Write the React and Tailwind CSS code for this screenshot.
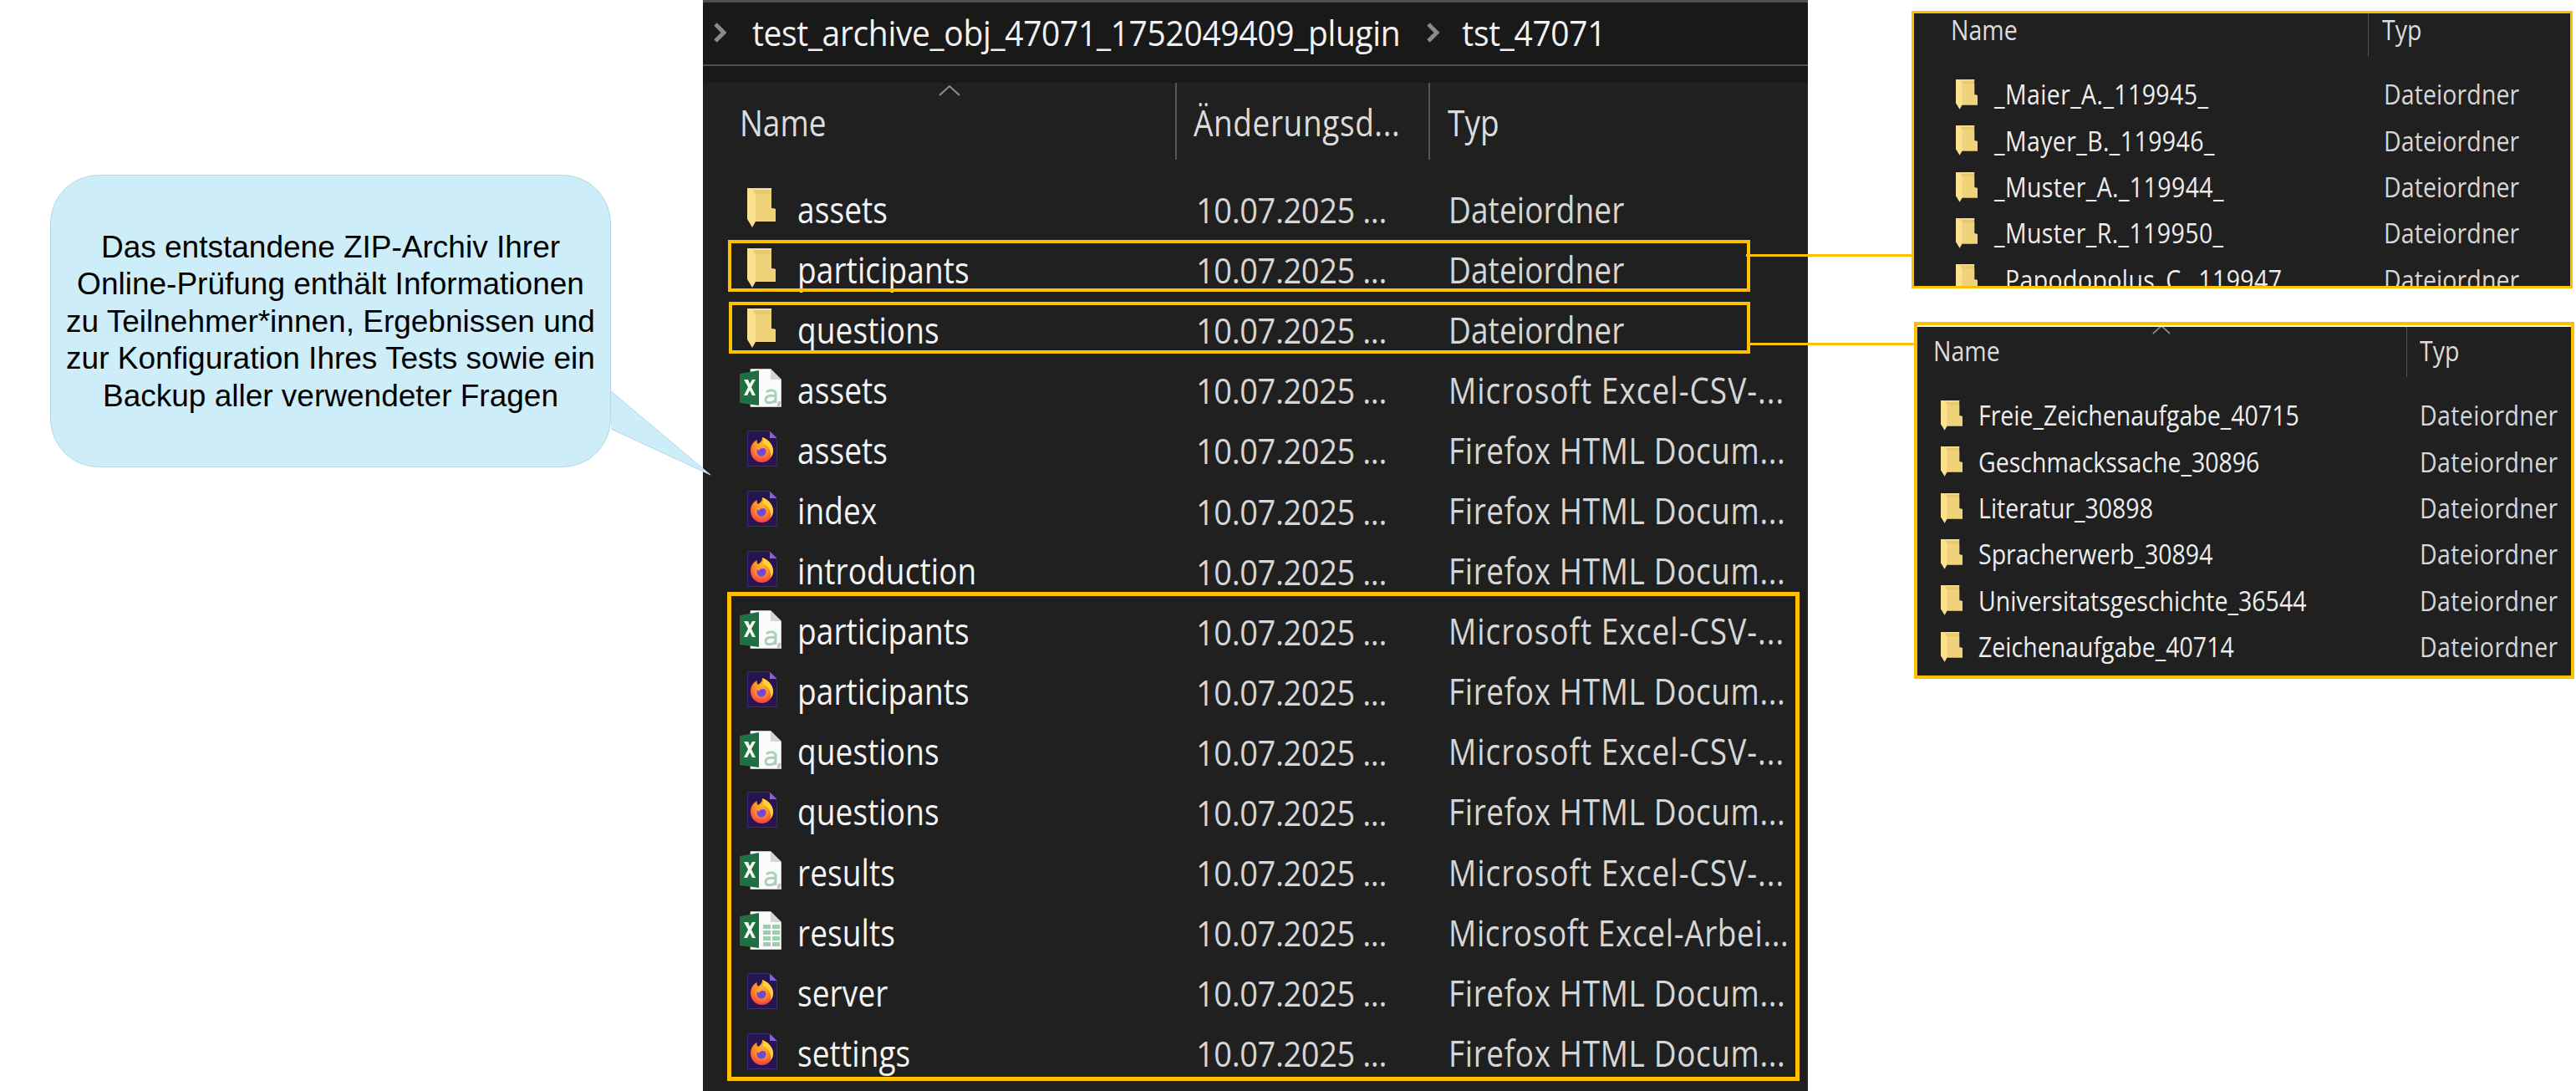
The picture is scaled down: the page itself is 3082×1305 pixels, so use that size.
const UI = "font-['Open_Sans',sans-serif]";

function FolderIcon({ className }) {
  return (
    <svg viewBox="0 0 34 48" className={className}>
      <path d="M6 1H29V25L34 26V41H10L6 40Z" fill="#e9c96c" />
      <path d="M10 8H29V25L34 26V41H10Z" fill="#f0d27a" />
      <path d="M0 1H6L10 8V41L6 48L0 38Z" fill="#fae08f" />
      <path d="M6 1H29V3H8Z" fill="#f8e2a0" />
    </svg>
  );
}

function ExcelIcon({ sheet }) {
  return (
    <svg viewBox="0 0 50 46" className="w-[50px] h-[46px]">
      <path d="M13 0.5H37L49.5 13V45.5H13Z" fill="#fbfbfb" stroke="#c8c8c8" />
      <path d="M37 0.5L49.5 13H37Z" fill="#d4d4d4" />
      {sheet ? (
        <g fill="#9fcdb0">
          <rect x="28" y="16" width="9" height="5" />
          <rect x="39" y="16" width="9" height="5" />
          <rect x="28" y="23" width="9" height="5" />
          <rect x="39" y="23" width="9" height="5" />
          <rect x="28" y="30" width="9" height="5" />
          <rect x="39" y="30" width="9" height="5" />
          <rect x="28" y="37" width="9" height="5" />
          <rect x="39" y="37" width="9" height="5" />
        </g>
      ) : (
        <g fill="none" stroke="#a5d3b5" strokeWidth="3">
          <path d="M32 28C35 25 42 25 43 29V41M43 33C36 31 31 33 31 37C31 42 39 42 43 37" />
          <path d="M48 39L46 45" stroke="#bcbcbc" />
        </g>
      )}
      <path d="M0 6L23 2V44L0 41Z" fill="#1f6f43" />
      <path d="M5 13H10L12 18L15 13H19L14 22L19 32H15L12 26L9 32H5L10 22Z" fill="#f2f7f3" />
    </svg>
  );
}

function FirefoxIcon() {
  return (
    <svg viewBox="0 0 36 43" className="w-[36px] h-[43px]">
      <defs>
        <radialGradient id="ffRing" cx="50%" cy="35%" r="70%">
          <stop offset="0%" stopColor="#ffb52e" />
          <stop offset="50%" stopColor="#ff8a1f" />
          <stop offset="100%" stopColor="#ef2f5a" />
        </radialGradient>
      </defs>
      <path d="M0.5 0.5H26L35.5 9V42.5H0.5Z" fill="#26154f" stroke="#3b2a78" />
      <path d="M27 0.5L35.5 9H27Z" fill="#8660e0" />
      <path d="M4 24C4 18 7 13 12 11C11 13 12 15 13 16C16 14 18 12 18 8C24 10 31 16 31 24C31 32 25 38 17.5 38C10 38 4 32 4 24Z" fill="url(#ffRing)" />
      <path d="M18 8C24 10 31 16 31 24C31 27 30 30 28 32C29 25 26 18 18 15C20 13 19 10 18 8Z" fill="#ffd23e" />
      <circle cx="17" cy="25" r="5.5" fill="#7048d8" />
      <path d="M11 21C14 18 20 17 23 22C19 20 15 21 14 24Z" fill="#ffa12b" />
    </svg>
  );
}

function Chevron() {
  return (
    <svg viewBox="0 0 18 26" className="w-[18px] h-[26px]">
      <path d="M3 3L13 13L3 23" fill="none" stroke="#8a8a8a" strokeWidth="5" />
    </svg>
  );
}

function Caret({ className }) {
  return (
    <svg viewBox="0 0 26 14" className={className}>
      <path d="M1 13L13 2L25 13" fill="none" stroke="#8f8f8f" strokeWidth="2" />
    </svg>
  );
}

const folderType = ["Dateiordner", "tracking-[0.1px]"];
const csvType = ["Microsoft Excel-CSV-...", "tracking-[1px]"];
const htmlType = ["Firefox HTML Docum...", "tracking-[0.6px]"];
const xlsxType = ["Microsoft Excel-Arbei...", "tracking-[0.6px]"];
const files = [
  ["folder", "assets", folderType],
  ["folder", "participants", folderType],
  ["folder", "questions", folderType],
  ["csv", "assets", csvType],
  ["html", "assets", htmlType],
  ["html", "index", htmlType],
  ["html", "introduction", htmlType],
  ["csv", "participants", csvType],
  ["html", "participants", htmlType],
  ["csv", "questions", csvType],
  ["html", "questions", htmlType],
  ["csv", "results", csvType],
  ["xlsx", "results", xlsxType],
  ["html", "server", htmlType],
  ["html", "settings", htmlType],
];

function FileIcon({ kind }) {
  if (kind === "folder") return <FolderIcon className="ml-[9px] w-[34px] h-[48px]" />;
  if (kind === "html") return <div className="ml-[9px]"><FirefoxIcon /></div>;
  return <ExcelIcon sheet={kind === "xlsx"} />;
}

function MainRow({ kind, name, type }) {
  return (
    <div className="flex items-center h-[72.1px] pl-[44px] text-[37px] leading-none">
      <div className="w-[69px] flex items-center -mt-[4px]">
        <FileIcon kind={kind} />
      </div>
      <span className="w-[477px] text-[#f4f4f4] tracking-[0.1px] scale-y-[1.16] origin-center">{name}</span>
      <span className="w-[302px] text-[38px] tracking-[-0.4px] text-[#d6d6d6] scale-y-[1.12]">10.07.2025 ...</span>
      <span className={`text-[#d6d6d6] whitespace-nowrap scale-y-[1.16] ${type[1]}`}>{type[0]}</span>
    </div>
  );
}

function SmallRow({ name, nameClass, typeClass, indent }) {
  return (
    <div className={`flex items-center h-[55.3px] text-[28.5px] leading-none ${indent}`}>
      <FolderIcon className="w-[26px] h-[37px] shrink-0" />
      <span className={`text-[#ededed] whitespace-nowrap scale-y-[1.16] ${nameClass}`}>{name}</span>
      <span className={`text-[#d6d6d6] scale-y-[1.16] ${typeClass}`}>Dateiordner</span>
    </div>
  );
}

export default function App() {
  return (
    <div className={`relative flex w-[3082px] h-[1305px] bg-white overflow-hidden ${UI}`}>
      {/* Sprechblase */}
      <div className="w-[841px] shrink-0 pl-[60px] pt-[209px]">
        <div className="flex items-center justify-center w-[671px] h-[350px] rounded-[58px] bg-[#cdedf8] border border-[#b7d6e1] text-center text-black font-['Liberation_Sans',sans-serif] text-[37px] leading-[44.6px]">
          <p className="whitespace-nowrap pt-[2px]">
            Das entstandene ZIP-Archiv Ihrer<br />
            Online-Prüfung enthält Informationen<br />
            zu Teilnehmer*innen, Ergebnissen und<br />
            zur Konfiguration Ihres Tests sowie ein<br />
            Backup aller verwendeter Fragen
          </p>
        </div>
      </div>

      {/* Explorer */}
      <div className="w-[1322px] shrink-0 h-full bg-[#202020] flex flex-col">
        <div className="h-[79px] shrink-0 bg-[#191919] border-t-[3px] border-t-[#4d4d4d] border-b-2 border-b-[#4f4f4f] flex items-center pl-[12px] pb-[2px] text-[#f2f2f2] text-[39px]">
          <Chevron />
          <span className="ml-[29px] tracking-[-0.35px] whitespace-nowrap scale-y-[1.1]">test_archive_obj_47071_1752049409_plugin</span>
          <span className="ml-[31px]"><Chevron /></span>
          <span className="ml-[25px] tracking-[-0.35px] scale-y-[1.1]">tst_47071</span>
        </div>
        <div className="h-[20px] shrink-0 bg-[#191919]" />
        <div className="h-[92px] shrink-0 flex text-[37px] text-[#dcdcdc] relative">
          <Caret className="absolute left-[282px] top-[2px] w-[26px] h-[14px]" />
          <div className="w-[567px] h-full border-r-2 border-[#555] pl-[44px] flex items-center pt-[4px]">
            <span className="scale-y-[1.16]">Name</span>
          </div>
          <div className="w-[303px] h-full border-r-2 border-[#555] pl-[20px] flex items-center pt-[4px]">
            <span className="scale-y-[1.16] tracking-[0.6px] whitespace-nowrap">Änderungsd...</span>
          </div>
          <div className="pl-[21px] flex items-center pt-[4px]">
            <span className="scale-y-[1.16]">Typ</span>
          </div>
        </div>
        <div className="pt-[23px]">
          {files.map((f, i) => (
            <MainRow key={i} kind={f[0]} name={f[1]} type={f[2]} />
          ))}
        </div>
      </div>

      {/* Ordnerinhalte */}
      <div className="flex-1 min-w-0 pt-[13px]">
        <div className="ml-[124px] w-[791px] h-[332px] border-[3px] border-[#ffc000] bg-[#202020] overflow-hidden">
          <div className="flex h-[51px] text-[28.5px] leading-[38px] text-[#dcdcdc]">
            <div className="w-[544px] h-full border-r border-[#555] pl-[44px]">
              <span className="inline-block scale-y-[1.16]">Name</span>
            </div>
            <div className="pl-[16px]">
              <span className="inline-block scale-y-[1.16]">Typ</span>
            </div>
          </div>
          <div className="pt-[18px]">
            {["_Maier_A._119945_", "_Mayer_B._119946_", "_Muster_A._119944_", "_Muster_R._119950_", "_Papodopolus_C._119947"].map((n) => (
              <SmallRow key={n} name={n} indent="pl-[50px]" nameClass="ml-[20px] w-[466px] tracking-[0.4px]" typeClass="tracking-[0.1px]" />
            ))}
          </div>
        </div>

        <div className="mt-[40px] ml-[127px] w-[790px] h-[427px] border-[4px] border-[#ffc000] bg-white pt-[2px]">
          <div className="h-full bg-[#202020] relative overflow-hidden">
            <Caret className="absolute left-[281px] -top-[3px] w-[22px] h-[12px]" />
            <div className="flex h-[60px] text-[28.5px] text-[#dcdcdc]">
              <div className="w-[586px] h-full border-r border-[#555] pl-[19px] pt-[7px]">
                <span className="inline-block scale-y-[1.16]">Name</span>
              </div>
              <div className="pl-[15px] pt-[7px]">
                <span className="inline-block scale-y-[1.16]">Typ</span>
              </div>
            </div>
            <div className="pt-[18px]">
              {["Freie_Zeichenaufgabe_40715", "Geschmackssache_30896", "Literatur_30898", "Spracherwerb_30894", "Universitatsgeschichte_36544", "Zeichenaufgabe_40714"].map((n) => (
                <SmallRow key={n} name={n} indent="pl-[28px]" nameClass="ml-[19px] w-[528px]" typeClass="tracking-[0.4px]" />
              ))}
            </div>
          </div>
        </div>
      </div>

      {/* Markierungen über dem Screenshot */}
      <svg viewBox="0 0 125 105" className="absolute left-[728px] top-[465px] w-[125px] h-[105px]">
        <path d="M3 3L122 103L3 48Z" fill="#cdedf8" />
        <path d="M3 3L122 103L3 48" fill="none" stroke="#b7d6e1" strokeWidth="1" />
      </svg>
      <div className="absolute left-[871px] top-[287px] w-[1223px] h-[62px] border-[4px] border-[#ffc000]" />
      <div className="absolute left-[872px] top-[361px] w-[1222px] h-[62px] border-[4px] border-[#ffc000]" />
      <div className="absolute left-[870px] top-[708px] w-[1283px] h-[585px] border-[5px] border-[#ffc000]" />
      <div className="absolute left-[2089px] top-[304px] w-[198px] h-[3px] bg-[#ffc000]" />
      <div className="absolute left-[2094px] top-[410px] w-[196px] h-[3px] bg-[#ffc000]" />
    </div>
  );
}
